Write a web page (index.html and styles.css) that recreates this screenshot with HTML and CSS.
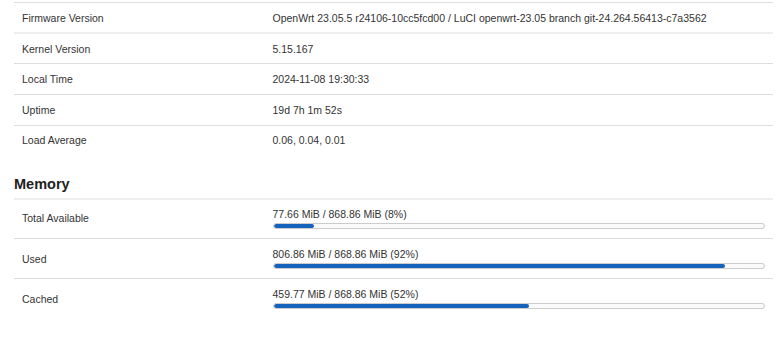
FILE: index.html
```html
<!DOCTYPE html>
<html lang="en">
<head>
    <meta charset="UTF-8">
    <meta name="viewport" content="width=device-width, initial-scale=1.0">
    <title>Status</title>
    <link rel="stylesheet" href="styles.css">
</head>
<body>
    <div class="page">
        <!-- System info table -->
        <div class="table system">
            <div class="tr first">
                <div class="td label">Firmware Version</div>
                <div class="td value">OpenWrt 23.05.5 r24106-10cc5fcd00 / LuCI openwrt-23.05 branch git-24.264.56413-c7a3562</div>
            </div>
            <div class="tr head-sep">
                <div class="td label">Kernel Version</div>
                <div class="td value">5.15.167</div>
            </div>
            <div class="tr">
                <div class="td label">Local Time</div>
                <div class="td value">2024-11-08 19:30:33</div>
            </div>
            <div class="tr">
                <div class="td label">Uptime</div>
                <div class="td value">19d 7h 1m 52s</div>
            </div>
            <div class="tr">
                <div class="td label">Load Average</div>
                <div class="td value">0.06, 0.04, 0.01</div>
            </div>
        </div>

        <h3 class="section-title">Memory</h3>

        <!-- Memory table with progress bars -->
        <div class="table memory">
            <div class="tr">
                <div class="td label">Total Available</div>
                <div class="td value">
                    <div class="bar-text">77.66 MiB / 868.86 MiB (8%)</div>
                    <div class="progress"><div class="fill" style="width: 8%"></div></div>
                </div>
            </div>
            <div class="tr">
                <div class="td label">Used</div>
                <div class="td value">
                    <div class="bar-text">806.86 MiB / 868.86 MiB (92%)</div>
                    <div class="progress"><div class="fill" style="width: 92%"></div></div>
                </div>
            </div>
            <div class="tr">
                <div class="td label">Cached</div>
                <div class="td value">
                    <div class="bar-text">459.77 MiB / 868.86 MiB (52%)</div>
                    <div class="progress"><div class="fill" style="width: 52%"></div></div>
                </div>
            </div>
        </div>
    </div>
</body>
</html>
```

FILE: styles.css
```css
* {
    box-sizing: border-box;
    margin: 0;
    padding: 0;
}

body {
    background: #fff;
    font-family: "Liberation Sans", Arial, sans-serif;
    font-size: 10.5px;
    color: #333;
}

.page {
    padding: 2px 7px 0 14px;
}

.table {
    display: flex;
    flex-direction: column;
}

.tr {
    display: flex;
    align-items: center;
    border-top: 1px solid #ddd;
    height: 31px;
}

.system .tr.first {
    height: 30px;
}

/* thicker, lighter line under the first row */
.system .tr.head-sep {
    border-top: 2px solid #eee;
}

.system .tr:last-child {
    height: 30px;
    padding-bottom: 2px;
}

.td {
    padding: 0 8px;
}

.label {
    width: 33%;
    flex-shrink: 0;
}

.value {
    flex: 1;
    white-space: nowrap;
}

.section-title {
    font-size: 14.5px;
    font-weight: bold;
    color: #222;
    margin-top: 21px;
    padding-bottom: 5px;
    border-bottom: 2px solid #eee;
    line-height: 17px;
}

.memory .tr {
    height: 40px;
}

.memory .tr:first-child {
    border-top: none;
    height: 38px;
    padding-bottom: 2px;
}

.bar-text {
    line-height: 13px;
    margin-bottom: 2px;
}

.progress {
    height: 6px;
    margin-left: 1px;
    border: 1px solid #ccc;
    border-radius: 3px;
    background: #fafafa;
    overflow: hidden;
}

.fill {
    height: 100%;
    background: #1562bd;
    border-radius: 2px;
}
```
